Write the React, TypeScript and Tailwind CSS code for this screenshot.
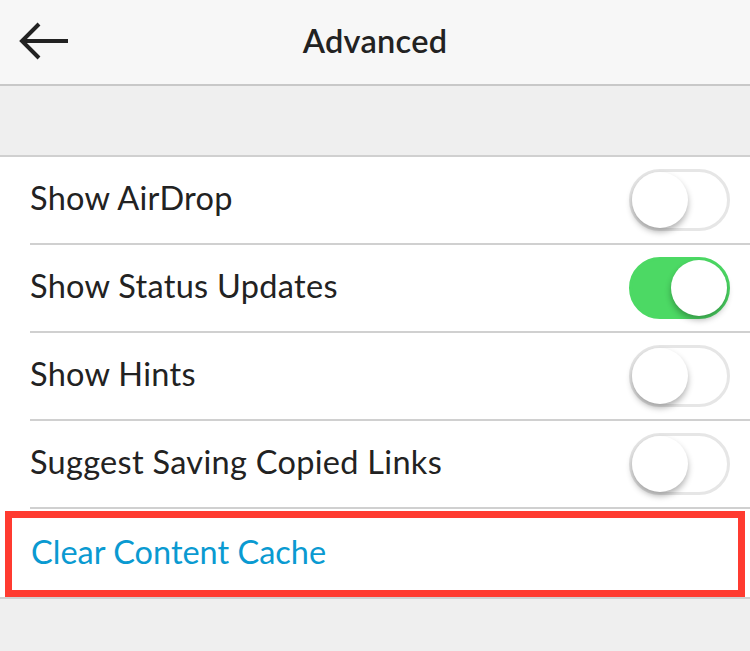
import React, { useState } from 'react';

interface Setting {
  id: string;
  label: string;
  on: boolean;
}

const initialSettings: Setting[] = [
  { id: 'airdrop', label: 'Show AirDrop', on: false },
  { id: 'status', label: 'Show Status Updates', on: true },
  { id: 'hints', label: 'Show Hints', on: false },
  { id: 'links', label: 'Suggest Saving Copied Links', on: false },
];

const Toggle: React.FC<{ on: boolean; onClick: () => void }> = ({ on, onClick }) => (
  <button
    onClick={onClick}
    className={`relative w-[101px] h-[62px] rounded-full border-[3px] transition-colors ${
      on ? 'bg-[#4cd964] border-[#4cd964]' : 'bg-white border-[#e6e6e6]'
    }`}
  >
    <span
      className={`absolute top-[0px] w-[56px] h-[56px] rounded-full bg-white shadow-[0_4px_6px_rgba(0,0,0,0.3)] transition-all ${
        on ? 'left-[39px]' : 'left-[0px]'
      }`}
    />
  </button>
);

export default function App() {
  const [settings, setSettings] = useState(initialSettings);

  const flip = (id: string) =>
    setSettings((s) => s.map((x) => (x.id === id ? { ...x, on: !x.on } : x)));

  return (
    <div className="w-[750px] h-[651px] bg-[#efefef] font-['Lato',sans-serif] text-[#222]">
      <div className="h-[86px] bg-[#f7f7f7] border-b-[2px] border-[#c8c8c8] flex items-center relative">
        <button className="absolute left-[18px] top-[21px]">
          <svg width="52" height="42" viewBox="0 0 52 42" fill="none" stroke="#222" strokeWidth="4">
            <path d="M50 20H4" />
            <path d="M21 3L4 20L21 37" />
          </svg>
        </button>
        <h1 className="w-full text-center text-[32.5px] font-semibold tracking-[0.3px] pb-[2px]">Advanced</h1>
      </div>

      <div className="h-[69px]" />

      <div className="bg-white border-t-[2px] border-[#d0d0d0]">
        {settings.map((s) => (
          <div key={s.id} className="pl-[30px]">
            <div className="h-[88px] flex items-center justify-between pr-[20px] border-b-[2px] border-[#d0d0d0]">
              <span className="text-[32.5px] tracking-[0.3px] pb-[3px]">{s.label}</span>
              <Toggle on={s.on} onClick={() => flip(s.id)} />
            </div>
          </div>
        ))}
        <div className="pt-[2px] px-[5px] border-b-[2px] border-[#d0d0d0]">
          <div className="h-[86px] border-[7px] border-[#ff3b30] flex items-center pl-[19px]">
            <span className="text-[32.5px] text-[#0a9ad1] pb-[4px]">Clear Content Cache</span>
          </div>
        </div>
      </div>
    </div>
  );
}
